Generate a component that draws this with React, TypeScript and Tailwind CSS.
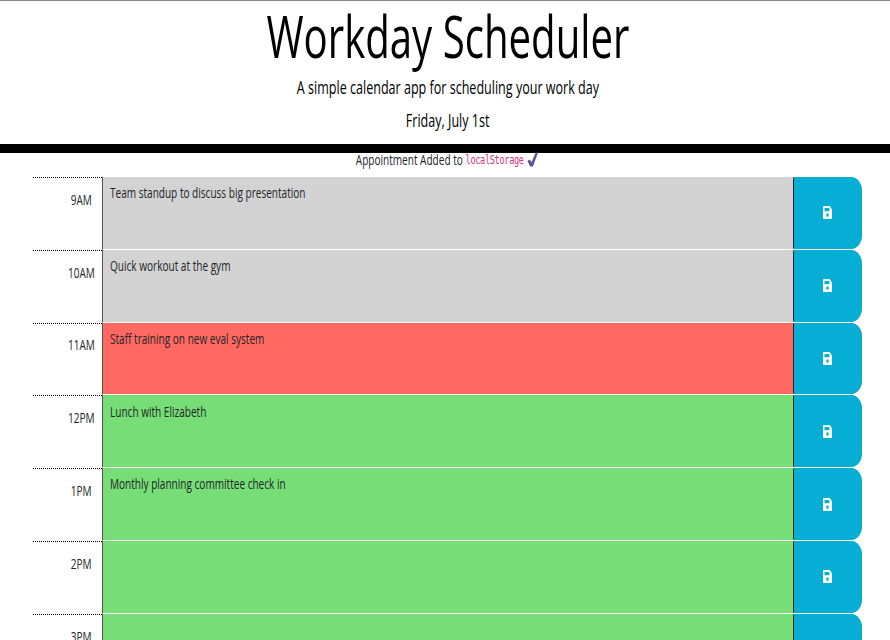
const rows = [
  { hour: "9AM", text: "Team standup to discuss big presentation", color: "bg-[#d3d3d3]" },
  { hour: "10AM", text: "Quick workout at the gym", color: "bg-[#d3d3d3]" },
  { hour: "11AM", text: "Staff training on new eval system", color: "bg-[#ff6961]" },
  { hour: "12PM", text: "Lunch with Elizabeth", color: "bg-[#77dd77]" },
  { hour: "1PM", text: "Monthly planning committee check in", color: "bg-[#77dd77]" },
  { hour: "2PM", text: "", color: "bg-[#77dd77]" },
  { hour: "3PM", text: "", color: "bg-[#77dd77]" },
];

function SaveIcon() {
  return (
    <svg className="mr-[2px] h-[13px] w-[9px]" viewBox="0 0 9 13" preserveAspectRatio="none" fill="currentColor">
      <path
        fillRule="evenodd"
        d="M1 0 H6.6 L9 3.2 V12 Q9 13 8 13 H1 Q0 13 0 12 V1 Q0 0 1 0 Z M1.5 2 V5.2 H6.3 V2 Z M4.5 7.3 A1.3 1.8 0 1 0 4.5 10.9 A1.3 1.8 0 1 0 4.5 7.3 Z"
      />
    </svg>
  );
}

export default function App() {
  return (
    <div className="h-[640px] w-[890px] overflow-hidden bg-white font-['Open_Sans',sans-serif] text-[14.56px] leading-[22px] text-[#212529]">
      <header className="flex h-[153px] flex-col items-center whitespace-nowrap border-t border-b-[9px] border-t-[#888] border-b-black pl-[5px]">
        <h1 className="-mt-[5px] -mb-[4px] h-[80px] scale-x-[.69] text-[58.2px] leading-[80px] text-black">Workday Scheduler</h1>
        <p className="mt-[2px] h-[27px] scale-x-[.69] text-[18.2px] leading-[27px] text-black">A simple calendar app for scheduling your work day</p>
        <p className="mt-[5.5px] h-[27px] scale-x-[.69] text-[18.2px] leading-[27px] text-black">Friday, July 1st</p>
      </header>
      <div className="flex h-[24px] justify-center pl-[4px]">
        <p className="-mt-[1px] flex h-[15px] scale-x-[.691] items-center gap-[4px] whitespace-nowrap leading-[15px]">
          <span>Appointment Added to</span>
          <code className="font-['DejaVu_Sans_Mono',monospace] text-[12.4px] tracking-[-0.45px] text-[#d63384]">localStorage</code>
          <svg className="ml-[1px] h-[15px] w-[16px]" viewBox="0 0 16 15" preserveAspectRatio="none">
            <path d="M.5 9 L3.5 7.5 L6.5 10 L12 1 L16 .3 L8.3 14.5 L4.5 14.5 Z" fill="#5c5399" />
          </svg>
        </p>
      </div>
      <main className="pl-[33px]">
        {rows.map((row) => (
          <div key={row.hour} className="flex h-[72.8px] w-[829px]">
            <div className="flex w-[69px] justify-center border-t border-dotted border-black pt-[9.8px] pl-[27.5px]">
              <span className="h-[22px] scale-x-[.691]">{row.hour}</span>
            </div>
            <div className={`flex w-[760px] border-b border-l border-b-white border-l-[#555] [border-radius:0_11px_11px_0/0_14px_14px_0] ${row.color}`}>
              <div className="w-[690px] pt-[4.2px] pl-[7.2px]">
                <span className="inline-block origin-left scale-x-[.691] whitespace-nowrap text-[#212529]">{row.text}</span>
              </div>
              <button className="flex w-[69px] items-center justify-center border-l border-[#222] bg-[#06aed5] text-white [border-radius:2px_11px_11px_2px/2px_14px_14px_2px]">
                <SaveIcon />
              </button>
            </div>
          </div>
        ))}
      </main>
    </div>
  );
}
